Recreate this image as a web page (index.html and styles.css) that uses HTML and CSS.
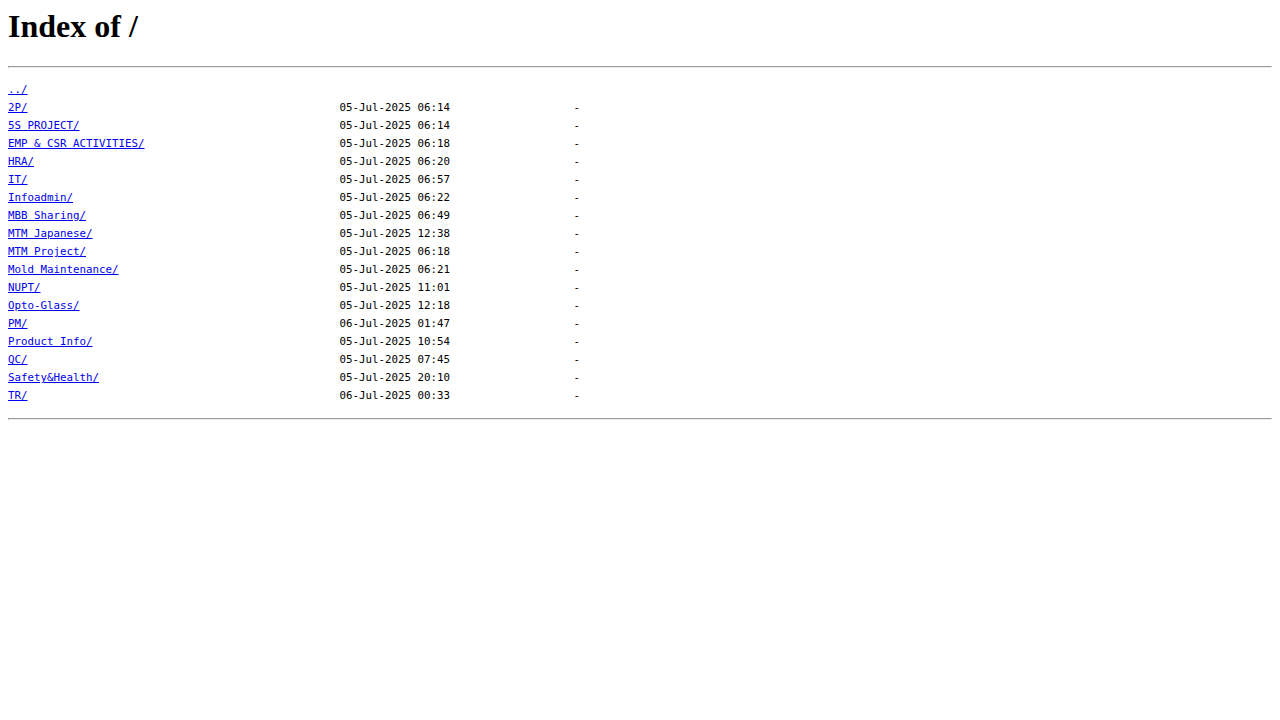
FILE: index.html
```html
<!DOCTYPE html>
<html>
<head>
    <meta charset="UTF-8">
    <title>Index of /</title>
    <link rel="stylesheet" href="styles.css">
</head>
<body>
    <h1>Index of /</h1>
    <hr>
    <div class="listing">
        <div class="row"><a href="../">../</a></div>
        <div class="row"><a href="2P/">2P/</a><span>05-Jul-2025 06:14</span><span class="size">-</span></div>
        <div class="row"><a href="5S%20PROJECT/">5S PROJECT/</a><span>05-Jul-2025 06:14</span><span class="size">-</span></div>
        <div class="row"><a href="EMP%20&amp;%20CSR%20ACTIVITIES/">EMP &amp; CSR ACTIVITIES/</a><span>05-Jul-2025 06:18</span><span class="size">-</span></div>
        <div class="row"><a href="HRA/">HRA/</a><span>05-Jul-2025 06:20</span><span class="size">-</span></div>
        <div class="row"><a href="IT/">IT/</a><span>05-Jul-2025 06:57</span><span class="size">-</span></div>
        <div class="row"><a href="Infoadmin/">Infoadmin/</a><span>05-Jul-2025 06:22</span><span class="size">-</span></div>
        <div class="row"><a href="MBB%20Sharing/">MBB Sharing/</a><span>05-Jul-2025 06:49</span><span class="size">-</span></div>
        <div class="row"><a href="MTM%20Japanese/">MTM Japanese/</a><span>05-Jul-2025 12:38</span><span class="size">-</span></div>
        <div class="row"><a href="MTM%20Project/">MTM Project/</a><span>05-Jul-2025 06:18</span><span class="size">-</span></div>
        <div class="row"><a href="Mold%20Maintenance/">Mold Maintenance/</a><span>05-Jul-2025 06:21</span><span class="size">-</span></div>
        <div class="row"><a href="NUPT/">NUPT/</a><span>05-Jul-2025 11:01</span><span class="size">-</span></div>
        <div class="row"><a href="Opto-Glass/">Opto-Glass/</a><span>05-Jul-2025 12:18</span><span class="size">-</span></div>
        <div class="row"><a href="PM/">PM/</a><span>06-Jul-2025 01:47</span><span class="size">-</span></div>
        <div class="row"><a href="Product%20Info/">Product Info/</a><span>05-Jul-2025 10:54</span><span class="size">-</span></div>
        <div class="row"><a href="QC/">QC/</a><span>05-Jul-2025 07:45</span><span class="size">-</span></div>
        <div class="row"><a href="Safety&amp;Health/">Safety&amp;Health/</a><span>05-Jul-2025 20:10</span><span class="size">-</span></div>
        <div class="row"><a href="TR/">TR/</a><span>06-Jul-2025 00:33</span><span class="size">-</span></div>
    </div>
    <hr>
</body>
</html>
```

FILE: styles.css
```css
body {
    margin: 8px;
    background-color: #ffffff;
    color: #000000;
}

h1 {
    font-family: 'Liberation Serif', serif;
    font-size: 32px;
    font-weight: bold;
    line-height: normal;
    margin: 0 0 21.44px 0;
}

hr {
    margin: 8px 0;
    color: gray;
    border-width: 1px;
    border-style: inset;
}

.listing {
    font-family: 'DejaVu Sans Mono', monospace;
    font-size: 10.8px;
    line-height: 18px;
    margin: 13px 0;
}

.row {
    display: grid;
    grid-template-columns: 51ch 17ch 20ch;
    white-space: pre;
}

.row a {
    color: #0000ee;
    text-decoration: underline;
}

.size {
    text-align: right;
}
```
